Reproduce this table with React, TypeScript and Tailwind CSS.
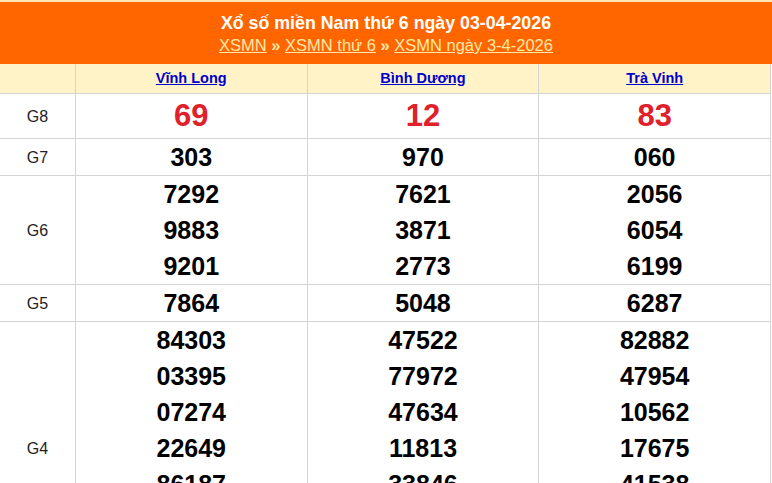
import React from 'react';

type Row = { label: string; values: string[][]; big?: boolean };

const provinces = ['Vĩnh Long', 'Bình Dương', 'Trà Vinh'];

const rows: Row[] = [
  { label: 'G8', values: [['69'], ['12'], ['83']], big: true },
  { label: 'G7', values: [['303'], ['970'], ['060']] },
  {
    label: 'G6',
    values: [
      ['7292', '9883', '9201'],
      ['7621', '3871', '2773'],
      ['2056', '6054', '6199'],
    ],
  },
  { label: 'G5', values: [['7864'], ['5048'], ['6287']] },
  {
    label: 'G4',
    values: [
      ['84303', '03395', '07274', '22649', '86187', '10001', '44332'],
      ['47522', '77972', '47634', '11813', '33846', '50012', '60211'],
      ['82882', '47954', '10562', '17675', '41538', '99120', '35271'],
    ],
  },
];

export default function App() {
  return (
    <div className="w-[772px] h-[483px] overflow-hidden bg-white font-['Liberation_Sans',Arial,sans-serif]">
      {/* Title bar */}
      <div className="border-t-2 border-[#ffe6b3] bg-[#ff6600] h-[64px] flex flex-col items-center pt-[10px]">
        <h1 className="text-white font-bold text-[17.8px] leading-[22px]">
          Xổ số miền Nam thứ 6 ngày 03-04-2026
        </h1>
        <div className="text-[16.5px] leading-[22px] text-[#ffe9a8]">
          <a className="underline" href="#">XSMN</a>
          <span className="font-bold"> » </span>
          <a className="underline" href="#">XSMN thứ 6</a>
          <span className="font-bold"> » </span>
          <a className="underline" href="#">XSMN ngày 3-4-2026</a>
        </div>
      </div>

      {/* Table */}
      <div className="w-[771px] border-r border-[#d4d4d4]">
        <div className="flex h-[30px] bg-[#fff3c7] border-b border-[#d4d4d4]">
          <div className="w-[76px] border-r border-[#d4d4d4]" />
          {provinces.map(p => (
            <div
              key={p}
              className="w-[232px] last:w-[231px] border-r last:border-r-0 border-[#d4d4d4] flex items-center justify-center"
            >
              <a href="#" className="text-[14.5px] font-bold text-[#0000cc] underline">
                {p}
              </a>
            </div>
          ))}
        </div>

        {rows.map(row => (
          <div key={row.label} className="flex border-b border-[#d4d4d4]">
            <div className="w-[76px] border-r border-[#d4d4d4] flex items-center justify-center pt-[2px] text-[16px] text-[#222]">
              {row.label}
            </div>
            {row.values.map((col, i) => (
              <div
                key={i}
                className="w-[232px] last:w-[231px] border-r last:border-r-0 border-[#d4d4d4] flex flex-col items-center"
              >
                {col.map(v =>
                  row.big ? (
                    <span key={v} className="text-[31px] leading-[44px] font-bold text-[#e0202a]">
                      {v}
                    </span>
                  ) : (
                    <span key={v} className="text-[25px] leading-[36px] font-bold text-black">
                      {v}
                    </span>
                  )
                )}
              </div>
            ))}
          </div>
        ))}
      </div>
    </div>
  );
}
